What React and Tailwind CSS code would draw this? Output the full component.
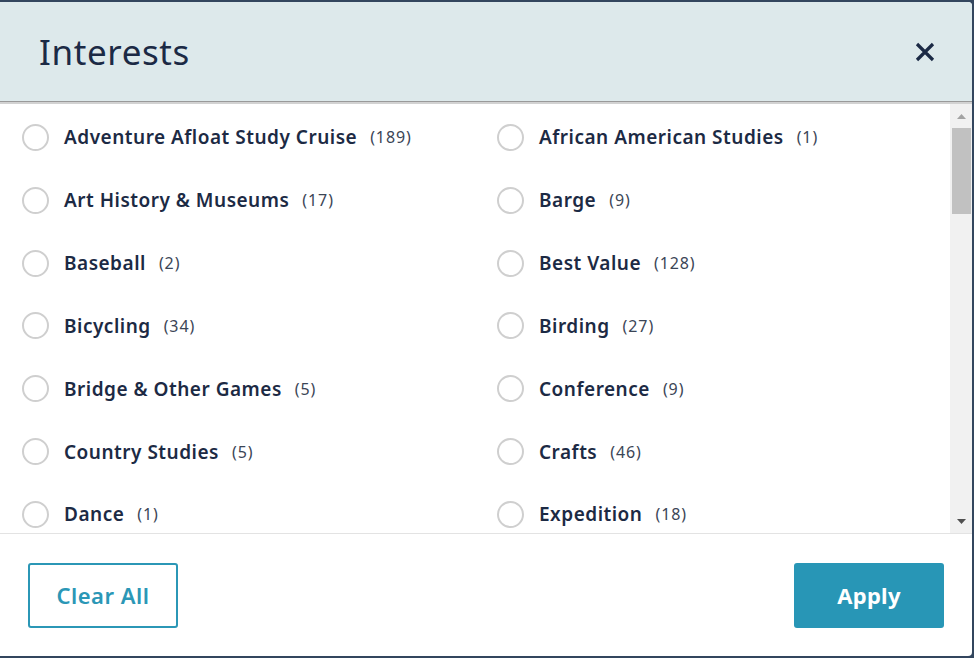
import React from "react";

const left = [
  ["Adventure Afloat Study Cruise", 189],
  ["Art History & Museums", 17],
  ["Baseball", 2],
  ["Bicycling", 34],
  ["Bridge & Other Games", 5],
  ["Country Studies", 5],
  ["Dance", 1],
];
const right = [
  ["African American Studies", 1],
  ["Barge", 9],
  ["Best Value", 128],
  ["Birding", 27],
  ["Conference", 9],
  ["Crafts", 46],
  ["Expedition", 18],
];

function Item({ label, count }) {
  return (
    <label className="flex items-center h-[62.85px] cursor-pointer whitespace-nowrap">
      <span className="w-[27px] h-[27px] rounded-full border-2 border-[#cfcfcf] bg-white shrink-0" />
      <span className="ml-[15px] text-[19px] leading-[26px] font-semibold text-[#1c2a44] tracking-[0.5px]">{label}</span>
      <span className="ml-[13px] text-[16px] leading-[22px] text-[#3b4556] tracking-[0.9px]">({count})</span>
    </label>
  );
}

export default function App() {
  const rows = left.map((l, i) => [l, right[i]]);
  return (
    <div
      className="w-[974px] h-[658px] bg-[#33465e] pt-[2px] pr-[2px] pb-[2px]"
      style={{ fontFamily: '"Noto Sans", "Open Sans", sans-serif' }}
    >
      <div className="h-full bg-white rounded-r-[4px] flex flex-col overflow-hidden">
        <div className="h-[100px] shrink-0 bg-[#dde9eb] border-b border-[#9a9a9a] flex items-center justify-between pl-[39px] pr-[37px]">
          <h2 className="text-[35px] text-[#1b2a45] tracking-[0.6px] leading-[44px] whitespace-nowrap">Interests</h2>
          <button className="text-[#1b2a45]" aria-label="Close">
            <svg width="20" height="20" viewBox="0 0 20 20">
              <path d="M2 2 L18 18 M18 2 L2 18" stroke="currentColor" strokeWidth="3.2" strokeLinecap="butt" />
            </svg>
          </button>
        </div>
        <div className="h-[431px] shrink-0 flex border-t-2 border-[#d2d2d2]">
          <div className="flex-1 overflow-hidden pl-[22px] pt-[2px]">
            {rows.map(([l, r], i) => (
              <div key={i} className="grid grid-cols-[475px_1fr]">
                <Item label={l[0]} count={l[1]} />
                <Item label={r[0]} count={r[1]} />
              </div>
            ))}
          </div>
          <div className="w-[22px] shrink-0 bg-[#f1f1f1] flex flex-col items-center">
            <div className="h-[24px] flex items-center justify-center">
              <svg width="9" height="5" viewBox="0 0 9 5">
                <path d="M0 5 L4.5 0 L9 5 Z" fill="#a3a3a3" />
              </svg>
            </div>
            <div className="w-[19px] h-[86px] bg-[#c1c1c1]" />
            <div className="flex-1" />
            <div className="h-[24px] flex items-center justify-center">
              <svg width="9" height="5" viewBox="0 0 9 5">
                <path d="M0 0 L9 0 L4.5 5 Z" fill="#505050" />
              </svg>
            </div>
          </div>
        </div>
        <div className="flex-1 border-t border-[#e3e3e3] flex items-center justify-between pl-[28px] pr-[28px]">
          <button className="w-[150px] h-[65px] border-2 border-[#2b97b6] rounded-[3px] text-[#2b97b6] text-[22px] leading-[30px] font-semibold tracking-[0.5px] whitespace-nowrap">
            Clear All
          </button>
          <button className="w-[150px] h-[65px] bg-[#2896b6] rounded-[3px] text-white text-[22px] leading-[30px] font-bold tracking-[0.3px] whitespace-nowrap">
            Apply
          </button>
        </div>
      </div>
    </div>
  );
}
